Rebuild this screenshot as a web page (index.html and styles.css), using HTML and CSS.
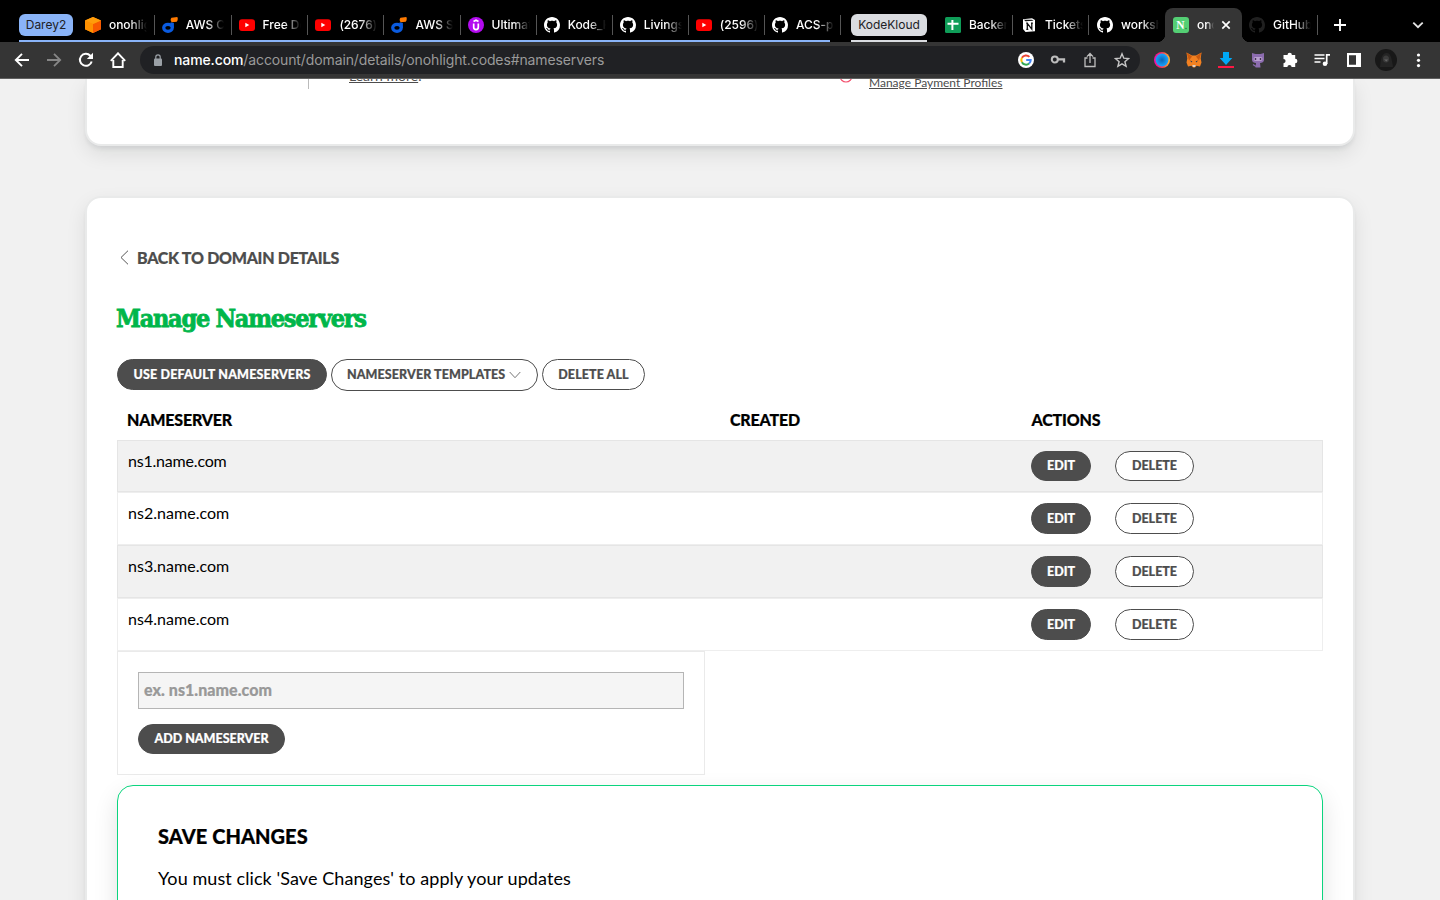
FILE: index.html
```html
<!DOCTYPE html>
<html lang="en">
<head>
<meta charset="utf-8">
<title>Manage Nameservers</title>
<link rel="stylesheet" href="styles.css">
</head>
<body>
<svg class="defs" width="0" height="0">
  <symbol id="yt" viewBox="0 0 16 16"><rect y="2.2" width="16" height="11.8" rx="3" fill="#f00"/><path d="M6.3 5.7v4.6l4-2.3z" fill="#fff"/></symbol>
  <symbol id="gh" viewBox="0 0 16 16"><path fill="currentColor" d="M8 0C3.58 0 0 3.58 0 8c0 3.54 2.29 6.53 5.47 7.59.4.07.55-.17.55-.38 0-.19-.01-.82-.01-1.49-2.01.37-2.53-.49-2.69-.94-.09-.23-.48-.94-.82-1.13-.28-.15-.68-.52-.01-.53.63-.01 1.08.58 1.23.82.72 1.21 1.87.87 2.33.66.07-.52.28-.87.51-1.07-1.78-.2-3.64-.89-3.64-3.95 0-.87.31-1.59.82-2.15-.08-.2-.36-1.02.08-2.12 0 0 .67-.21 2.2.82.64-.18 1.32-.27 2-.27s1.36.09 2 .27c1.53-1.04 2.2-.82 2.2-.82.44 1.1.16 1.92.08 2.12.51.56.82 1.27.82 2.15 0 3.07-1.87 3.75-3.65 3.95.29.25.54.73.54 1.48 0 1.07-.01 1.93-.01 2.2 0 .21.15.46.55.38A8.01 8.01 0 0 0 16 8c0-4.42-3.58-8-8-8z"/></symbol>
  <symbol id="aws" viewBox="0 0 16 16"><ellipse cx="6" cy="10.800" rx="4.300" ry="3.500" fill="none" stroke="#0a5be0" stroke-width="3.200"/><path d="M8.600 10V5.200l3.300.8V11z" fill="#0a5be0"/><path d="M9.500.8 15.300 0c.8 1.600.6 3.300-.6 4.800L9.700 5.200C8.300 3.800 8.300 2 9.500.8z" fill="#ff7a00"/></symbol>
</svg>
<header class="browser">
  <div class="tabs">
    <div class="group blue">
      <span class="chip">Darey2</span>
      <div class="tab wide"><svg viewBox="0 0 16 16"><path d="M8 0l8 3.600v8.700L8 16l-8-3.700V3.600z" fill="#ff8200"/><path d="M0 3.600 8 7v9l-8-3.700z" fill="#ff9100"/><path d="M16 3.600 8 7v9l8-3.700z" fill="#f85a00"/><path d="M8 0l8 3.600L8 7 0 3.600z" fill="#ff9d0a"/></svg><span>onohligh</span></div>
      <div class="tab wide"><svg><use href="#aws"/></svg><span>AWS Co</span></div>
      <div class="tab wide"><svg><use href="#yt"/></svg><span>Free Dev</span></div>
      <div class="tab"><svg><use href="#yt"/></svg><span>(2676) Y</span></div>
      <div class="tab"><svg><use href="#aws"/></svg><span>AWS So</span></div>
      <div class="tab"><svg viewBox="0 0 16 16"><circle cx="8" cy="8" r="8" fill="#b30bf0"/><path d="M5.500 4.600 8 3.200l2.500 1.400M5.700 6.500v3.800a2.300 2.300 0 0 0 4.600 0V6.500" fill="none" stroke="#fff" stroke-width="1.700"/></svg><span>Ultimate</span></div>
      <div class="tab"><svg><use href="#gh"/></svg><span>Kode_K</span></div>
      <div class="tab"><svg><use href="#gh"/></svg><span>Livingst</span></div>
      <div class="tab"><svg><use href="#yt"/></svg><span>(2596) Y</span></div>
      <div class="tab"><svg><use href="#gh"/></svg><span>ACS-pro</span></div>
    </div>
    <div class="group grey"><span class="chip">KodeKloud</span></div>
    <div class="loose">
      <div class="tab"><svg viewBox="0 0 16 16"><rect width="16" height="16" rx="1.500" fill="#0f9d58"/><path d="M7.400 3v10M2.500 6.700h11" stroke="#fff" stroke-width="2"/></svg><span>Backend</span></div>
      <div class="tab"><svg viewBox="0 0 16 16"><path d="M2 2.200 11 1.200 14 3v11.200L4.500 15 2 12z" fill="#fff"/><path d="M3 2.800h8l1.500 1L4.300 4.200z" fill="#111"/><path d="M6.300 12.300V6.400l4.500 5.700V6.200M5.300 6.300h1.500M10 6.100h1.900M5.300 12.400h2" fill="none" stroke="#111" stroke-width="1.300"/></svg><span>Tickets</span></div>
      <div class="tab"><svg><use href="#gh"/></svg><span>worksho</span></div>
      <div class="tab active"><svg viewBox="0 0 16 16"><rect width="16" height="16" rx="3" fill="#54cf74"/><text x="3.300" y="12" class="fav">N</text><circle cx="13" cy="11.500" r=".7" fill="#276b3a"/></svg><span>onoh</span><svg class="x" viewBox="0 0 16 16"><path d="M4.300 4.300l7.400 7.400M11.700 4.300l-7.400 7.400" stroke="#fff" stroke-width="1.700"/></svg></div>
      <div class="tab dim"><svg><use href="#gh"/></svg><span>GitHub -</span></div>
    </div>
    <svg class="plus" viewBox="0 0 16 16"><path d="M8 2v12M2 8h12" stroke="#fff" stroke-width="1.900"/></svg>
    <svg class="down" viewBox="0 0 16 16"><path d="M3.300 5.600 8 10.200l4.700-4.600" fill="none" stroke="#e4e4e4" stroke-width="1.800"/></svg>
  </div>
  <div class="toolbar">
    <div class="nav">
      <svg viewBox="0 0 16 16"><path d="M15 8H2M8 1.800 1.800 8 8 14.200" fill="none" stroke="#fff" stroke-width="1.900"/></svg>
      <svg viewBox="0 0 16 16"><path d="M1 8h13M8 1.800 14.200 8 8 14.200" fill="none" stroke="#878787" stroke-width="1.800"/></svg>
      <svg viewBox="0 0 16 16"><path d="M13.700 9.500A6 6 0 1 1 12.300 3.700L14 5.500" fill="none" stroke="#fff" stroke-width="2"/><path d="M15 .8v6.200H8.800z" fill="#fff"/></svg>
      <svg viewBox="0 0 16 16"><path d="M3.300 8v7h9.400V8M.8 8.800 8 1.300l7.200 7.500" fill="none" stroke="#fff" stroke-width="1.900"/></svg>
    </div>
    <div class="url">
      <svg class="lock" viewBox="0 0 10 12"><rect x="1" y="4.500" width="8" height="7.500" rx="1" fill="#9aa0a6"/><path d="M2.800 5V3a2.200 2.200 0 0 1 4.400 0v2" fill="none" stroke="#9aa0a6" stroke-width="1.200"/></svg>
      <span class="address"><b>name.com</b>/account/domain/details/onohlight.codes#nameservers</span>
      <div class="cells">
        <svg viewBox="0 0 16 16"><circle cx="8" cy="8" r="8" fill="#fff"/><g fill="none" stroke-width="2"><path d="M11.400 4.900A4.700 4.700 0 0 0 3.900 5.800" stroke="#ea4335"/><path d="M3.900 5.800a4.700 4.700 0 0 0 0 4.400" stroke="#fbbc05"/><path d="M3.900 10.200a4.700 4.700 0 0 0 7.200 1.300" stroke="#34a853"/><path d="M11.100 11.500A4.500 4.500 0 0 0 12.700 8H8.200" stroke="#4285f4"/></g></svg>
        <svg viewBox="0 0 16 16"><circle cx="4.800" cy="7.500" r="3" fill="none" stroke="#bdbdbd" stroke-width="2.100"/><path d="M8 7.300h6v3.200" fill="none" stroke="#bdbdbd" stroke-width="2.300"/></svg>
        <svg viewBox="0 0 16 16"><path d="M5.500 6H3v8.500h10V6h-2.500M8 11V2M4.900 4.600 8 1.500l3.100 3.100" fill="none" stroke="#bdbdbd" stroke-width="1.300"/></svg>
        <svg viewBox="0 0 16 16"><path d="M8 1.800l1.800 4.400 4.800.4-3.700 3.100 1.200 4.600L8 11.800l-4.100 2.500 1.200-4.600L1.400 6.600l4.800-.4z" fill="none" stroke="#c6c6c6" stroke-width="1.400"/></svg>
      </div>
    </div>
    <div class="cells">
      <svg viewBox="0 0 16 16"><defs><radialGradient id="rb"><stop offset="0" stop-color="#0a65b5"/><stop offset="1" stop-color="#18a5ff"/></radialGradient><linearGradient id="ring" x1="0" x2="1"><stop offset="0" stop-color="#f20ab0"/><stop offset=".5" stop-color="#f33455"/><stop offset="1" stop-color="#ffc02e"/></linearGradient></defs><circle cx="8" cy="8" r="8" fill="url(#ring)"/><circle cx="8" cy="8" r="6.400" fill="url(#rb)"/></svg>
      <svg viewBox="0 0 16 16"><path d="M.5.5 6 3.500h4L15.500.5l-.8 6 .8 4-1.500 4-3.500-.8L9 15.500H7l-1.500-1.800-3.500.8-1.500-4 .8-4z" fill="#f28121"/><path d="M.5.5l5.500 4-3 4zM15.500.5l-5.500 4 3 4z" fill="#c95a10"/><path d="M3.800 8.500l2.500.8-.5 1.200zM12.200 8.500l-2.500.8.5 1.200z" fill="#263b50"/><path d="M6.300 13h3.400L9 15H7z" fill="#d8d0c8"/></svg>
      <svg viewBox="0 0 16 16"><path d="M5 0h6v6h3.300L8 13 1.700 6H5z" fill="#00a8f5"/><path d="M0 14h16v2H0z" fill="#ff1744"/></svg>
      <svg viewBox="0 0 16 16"><path d="M2 1l3.500 1h5L14 1v7c0 2-2 2.700-4 3l.5 4.500h-5L6 11c-2-.3-4-1-4-3z" fill="#8c6caf"/><path d="M3 12.500l3 2" stroke="#8c6caf" stroke-width="1.300"/><rect x="3.500" y="5" width="9" height="4" rx="2" fill="#b9a0cf"/><path d="M5.500 6v2M10.500 6v2" stroke="#473359" stroke-width="1.400"/></svg>
      <svg viewBox="0 0 16 16"><path d="M5.500 3a2.200 2.200 0 0 1 4.400 0h3.300v3.800a2.200 2.200 0 0 1 0 4.400V15H9.600a2.100 2.100 0 0 0-4.200 0H1.500v-3.800a2.100 2.100 0 0 0 0-4.200V3z" fill="#fff"/></svg>
      <svg viewBox="0 0 16 16"><path d="M.5 3h10M.5 6.500h10M.5 10h6M12.700 12V2.800H16" fill="none" stroke="#fff" stroke-width="1.700"/><circle cx="11" cy="11.700" r="2.300" fill="#fff"/></svg>
      <svg viewBox="0 0 16 16"><path fill-rule="evenodd" d="M1 1h14v14H1zm2 2.300v9.400h7V3.300z" fill="#fff"/></svg>
      <svg class="avatar" viewBox="0 0 22 22"><circle cx="11" cy="11" r="11" fill="#181818"/><path d="M5 18C6 11 6 5 11 4s6 7 7 14z" fill="#242424"/><ellipse cx="11" cy="10" rx="3" ry="3.500" fill="#3c3c3c"/><path d="M9 10.500h4l-1.500 2z" fill="#666"/></svg>
      <svg viewBox="0 0 16 16" fill="#fff"><circle cx="8.500" cy="3" r="1.600"/><circle cx="8.500" cy="8.300" r="1.600"/><circle cx="8.500" cy="13.600" r="1.600"/></svg>
    </div>
  </div>
</header>
<main class="page">
  <section class="card summary">
    <div class="summary-left"></div>
    <a class="learn"><u>Learn more</u>.</a>
    <svg class="ring" viewBox="0 0 14 14"><circle cx="7" cy="7" r="6" fill="none" stroke="#f3506e" stroke-width="1.200"/></svg>
    <a class="profiles">Manage Payment Profiles</a>
  </section>
  <section class="card manage">
    <a class="back"><svg viewBox="0 0 9 15"><path d="M8 .7 1 7.500l7 6.800" fill="none" stroke="#555"/></svg><span>BACK TO DOMAIN DETAILS</span></a>
    <h1><span>Manage Nameservers</span></h1>
    <div class="buttons">
      <button class="btn dark defaults"><span>USE DEFAULT NAMESERVERS</span></button>
      <button class="btn tall templates"><span>NAMESERVER TEMPLATES</span><svg viewBox="0 0 12 8"><path d="M.7 1 6 6.700 11.300 1" fill="none" stroke="#666" stroke-width=".9"/></svg></button>
      <button class="btn all"><span>DELETE ALL</span></button>
    </div>
    <div class="head"><span>NAMESERVER</span><span>CREATED</span><span>ACTIONS</span></div>
    <div class="row first"><span>ns1.name.com</span><button class="btn dark edit">EDIT</button><button class="btn del">DELETE</button></div>
    <div class="row"><span>ns2.name.com</span><button class="btn dark edit">EDIT</button><button class="btn del">DELETE</button></div>
    <div class="row odd"><span>ns3.name.com</span><button class="btn dark edit">EDIT</button><button class="btn del">DELETE</button></div>
    <div class="row last"><span>ns4.name.com</span><button class="btn dark edit">EDIT</button><button class="btn del">DELETE</button></div>
    <div class="add">
      <div class="input"><span>ex. ns1.name.com</span></div>
      <button class="btn dark"><span>ADD NAMESERVER</span></button>
    </div>
    <div class="save">
      <h2>SAVE CHANGES</h2>
      <p>You must click 'Save Changes' to apply your updates</p>
    </div>
  </section>
</main>
</body>
</html>
```
FILE: styles.css
```css
* { box-sizing: border-box; }
body { margin: 0; width: 1440px; height: 900px; overflow: hidden; background: #f1f1f1; color: #000; font-family: Lato, sans-serif; }
.defs { display: block; height: 0; }
.browser { height: 79px; background: #353535; border-bottom: 1px solid #606060; font-family: Inter, sans-serif; }
.tabs { height: 42px; background: #000; display: flex; padding: 8px 0 0 19px; }
.group { display: flex; height: 34px; border-bottom: 2px solid #8ab4f8; }
.group.blue { width: 811px; }
.group.grey { width: 76px; margin-left: 21px; border-color: #dadce0; }
.chip { height: 22px; margin-top: 6px; border-radius: 6px; font-size: 12px; line-height: 22px; text-align: center; color: #202124; flex: none; }
.blue .chip { width: 54px; background: #8ab4f8; margin-right: 5px; }
.grey .chip { width: 76px; background: #dadce0; }
.tab { position: relative; flex: none; display: flex; align-items: center; width: 76.1px; height: 34px; padding-left: 7px; color: #fff; font-size: 12px; font-weight: 500; }
.tab.wide { width: 76.800px; }
.tab svg { width: 16px; height: 16px; flex: none; margin-right: 8px; }
.tab span { width: 38px; overflow: hidden; white-space: nowrap; padding-bottom: 2px; letter-spacing: -.05px; -webkit-mask-image: linear-gradient(90deg, #000 55%, transparent); mask-image: linear-gradient(90deg, #000 55%, transparent); }
.tab::after { content: ""; position: absolute; right: 0; top: 7px; width: 1px; height: 20px; background: #555; }
.loose { display: flex; margin-left: 10px; }
.loose .tab { width: 76px; padding-left: 8px; }
.loose .tab.active { width: 77px; background: #353535; border-radius: 8px 8px 0 0; }
.tab.active span { width: 17px; }
.tab.active .x { margin: 0 0 0 4px; }
.tab.active::before { content: ""; position: absolute; left: -8px; right: -8px; bottom: 0; height: 8px; background: radial-gradient(circle at 0 0, transparent 8px, #353535 8.500px) left / 8px 8px no-repeat, radial-gradient(circle at 8px 0, transparent 8px, #353535 8.500px) right / 8px 8px no-repeat; }
.tab.active::after, .loose .tab:nth-child(3)::after { display: none; }
.tab.dim svg { color: #202020; }
.loose .tab.dim { padding-left: 7px; }
.fav { font: bold 11.500px "Liberation Serif", serif; fill: #fff; }
.plus { width: 16px; height: 16px; margin: 9px 0 0 14px; }
.down { width: 16px; height: 16px; margin: 9px 14px 0 auto; }
.toolbar { height: 36px; display: flex; align-items: center; }
.nav, .cells { display: flex; align-items: center; }
.nav { width: 134px; padding-left: 6px; }
.nav svg, .cells svg { width: 16px; height: 16px; margin: 0 8px; flex: none; }
.cells .avatar { width: 22px; height: 22px; margin: 0 5px; }
.url { width: 1000px; height: 28px; margin: 0 6px; border-radius: 14px; background: #202124; display: flex; align-items: center; padding: 0 2px 0 13px; color: #9a9a9a; font-size: 14px; }
.lock { width: 10px; height: 12px; margin-right: 11px; }
.address { flex: 1; white-space: nowrap; letter-spacing: -.115px; padding-bottom: 2px; }
.address b { font-weight: 500; color: #fff; }
.page { height: 821px; overflow: hidden; }
.card { width: 1270px; margin: 0 auto; border: 2px solid #e9eaea; background: #fff; box-shadow: 0 8px 20px rgba(0, 20, 15, .09), 0 4px 4px -1px rgba(10, 20, 40, .07); }
.summary { height: 67px; border-top: 0; border-radius: 0 0 16px 16px; display: flex; align-items: flex-start; overflow: hidden; color: #4d4d4d; }
.summary-left { width: 222px; height: 10px; border-right: 1px solid #bbb; }
.learn { margin: -12px 0 0 40px; width: 491px; font-size: 14px; line-height: 17px; }
.ring { width: 14px; height: 14px; margin: -10px 16px 0 -1px; }
.profiles { margin: -4px 0 0; font-size: 12px; line-height: 15px; text-decoration: underline; }
.manage { height: 900px; margin-top: 50px; border-radius: 16px; padding: 48px 30px 0; }
.back { display: flex; height: 24px; align-items: center; color: #4d4d4d; font-size: 16px; font-weight: 900; letter-spacing: -.28px; -webkit-text-stroke: .2px; }
.back svg { width: 9px; height: 15px; margin: 0 8px 2px 3px; }
.back span { padding-bottom: 2px; }
h1 { margin: 31px 0 0 -1px; height: 36px; font: bold 25px/36px "DejaVu Serif Condensed", "DejaVu Serif", serif; color: #00b64a; letter-spacing: -1.250px; -webkit-text-stroke: .8px; }
.buttons { display: flex; margin-top: 22px; height: 42px; gap: 4px; align-items: flex-start; }
.btn { height: 31px; padding: 0 15px; border: 1px solid #4d4d4d; border-radius: 16px; background: #fff; color: #4d4d4d; font: 900 12.500px/29px Lato, sans-serif; white-space: nowrap; -webkit-text-stroke: .2px; }
.btn.dark { background: #4d4d4d; color: #fff; }
.btn.tall { height: 32px; }
.defaults { width: 210px; padding: 0; letter-spacing: .17px; }
.templates { width: 207px; display: flex; align-items: center; letter-spacing: .09px; }
.templates span { padding-bottom: 1px; }
.templates svg { width: 12px; height: 8px; margin-left: 4px; }
.all { width: 103px; letter-spacing: .1px; }
.head { height: 39px; padding: 0 10px 2px; display: grid; grid-template-columns: 603px 301.500px 1fr; align-items: center; font-size: 16px; font-weight: 900; letter-spacing: -.18px; -webkit-text-stroke: .2px; }
.row { height: 53px; border: 1px solid #eee; display: flex; padding: 10px; font-size: 16px; }
.row.first { height: 52px; }
.row.first, .row.odd { background: #f1f1f1; border-color: #e5e5e5; }
.row span { width: 903px; line-height: 20px; letter-spacing: .03px; }
.row.first span { letter-spacing: -.2px; }
.row .btn { flex: none; }
.row.first .btn { height: 30px; line-height: 28px; }
.row.last .btn { line-height: 28px; }
.edit { width: 60px; }
.del { width: 79px; margin-left: 24px; }
.add { width: 588px; height: 124px; border: 1px solid #eaeaea; padding: 20px; }
.input { height: 37px; margin-bottom: 15px; border: 1px solid #b5b5b5; background: #f5f5f5; padding-left: 5px; color: #999; font-size: 16px; font-weight: 900; line-height: 33px; letter-spacing: .05px; -webkit-text-stroke: .2px; }
.add .btn { width: 147px; height: 30px; line-height: 28px; }
.save { margin-top: 10px; height: 200px; border: 1px solid #0bd47e; border-radius: 16px; padding: 36px 40px; box-shadow: 0 10px 24px rgba(0, 0, 0, .12); }
h2 { margin: 0; font-size: 20px; font-weight: 900; line-height: 28px; letter-spacing: .06px; -webkit-text-stroke: .2px; }
p { margin: 16px 0 0; font-size: 18px; line-height: 24px; letter-spacing: .08px; }
```
